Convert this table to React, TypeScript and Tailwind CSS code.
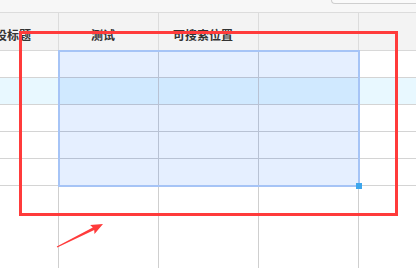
import React from 'react'

const widths = ['w-[59px]', 'w-[100px]', 'w-[100px]', 'w-[100px]', 'w-[57px]']
const selected = [false, true, true, true, false]

function BodyRow({ active }: { active: boolean }) {
  return (
    <div className="flex h-[27px] shrink-0">
      {widths.map((w, i) => {
        const sel = selected[i]
        const bg = sel
          ? active
            ? 'bg-[#d0e9ff]'
            : 'bg-[#e5efff]'
          : active
            ? 'bg-[#e8f8ff]'
            : 'bg-white'
        const line = sel ? 'border-[#b8c2d4]' : 'border-[#d4d4d4]'
        return (
          <div
            key={i}
            className={`${w} h-full shrink-0 border-b ${i < 4 ? 'border-r' : ''} ${line} ${bg}`}
          />
        )
      })}
    </div>
  )
}

export default function App() {
  return (
    <div
      className="relative w-[416px] h-[268px] overflow-hidden bg-white flex flex-col"
      style={{ fontFamily: '"Noto Sans CJK SC", "Noto Sans", sans-serif' }}
    >
      {/* toolbar strip with the bottom edge of a search box */}
      <div className="h-[13px] shrink-0 flex bg-[#f7f7f7] border-b border-[#dcdcdc]">
        <div className="ml-auto mr-[-6px] w-[91px] h-[4px] bg-[#fafafa] border-l border-b border-[#cfcfcf] rounded-bl-[4px]" />
      </div>

      {/* header */}
      <div className="flex h-[38px] shrink-0 bg-[#f3f3f3] border-b border-[#d8d8d8] text-[12px] leading-[12px] font-bold text-[#333]">
        <div className="w-[59px] shrink-0 border-r border-[#dcdcdc] flex justify-end pr-[27px] pt-[16px] overflow-hidden whitespace-nowrap">
          设标题
        </div>
        <div className="w-[100px] shrink-0 border-r border-[#dcdcdc] pl-[32px] pt-[16px] whitespace-nowrap">
          测试
        </div>
        <div className="w-[100px] shrink-0 border-r border-[#dcdcdc] pl-[14px] pt-[16px] whitespace-nowrap">
          可搜索位置
        </div>
        <div className="w-[100px] shrink-0 border-r border-[#dcdcdc]" />
        <div className="w-[57px] shrink-0" />
      </div>

      {/* body rows */}
      <BodyRow active={false} />
      <BodyRow active={true} />
      <BodyRow active={false} />
      <BodyRow active={false} />
      <BodyRow active={false} />

      {/* empty area below the rows */}
      <div className="flex flex-1">
        {widths.map((w, i) => (
          <div key={i} className={`${w} shrink-0 ${i < 4 ? 'border-r border-[#cfcfcf]' : ''}`} />
        ))}
      </div>

      {/* selection range */}
      <div className="absolute left-[58px] top-[50px] w-[302px] h-[137px] border-2 border-[#a6c4f6]" />
      <div className="absolute left-[356px] top-[183px] w-[6px] h-[6px] bg-[#3ea6ec]" />

      {/* annotation */}
      <div className="absolute left-[19px] top-[31px] w-[379px] h-[185px] border-[3px] border-[#ff3b3b]" />
      <svg className="absolute left-0 top-0" width="416" height="268" viewBox="0 0 416 268">
        <polygon
          points="56.8,246.6 92.8,227.5 90.1,224.9 103,224 94.5,233.9 94.2,230.1 57.2,247.4"
          fill="#ff3b3b"
        />
      </svg>
    </div>
  )
}
